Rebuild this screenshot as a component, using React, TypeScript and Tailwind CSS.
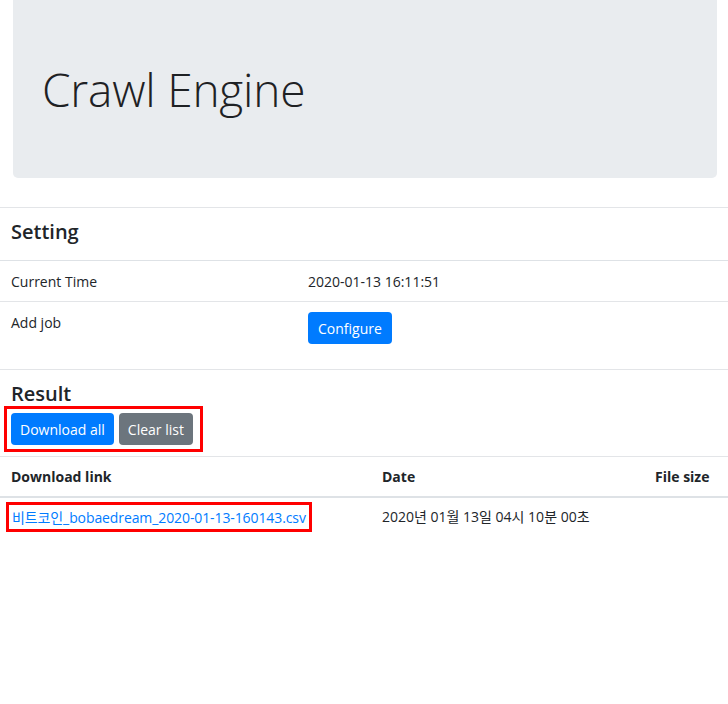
import React from "react";

const font = "font-['Open_Sans','Noto_Sans_CJK_KR',sans-serif]";

export default function App() {
  return (
    <div className={`${font} bg-white text-[#212529] text-[14px] w-[728px] h-[704px] overflow-hidden`}>
      {/* Jumbotron */}
      <div className="ml-[13px] mr-[11px] h-[178px] bg-[#e9ecef] rounded-b-[5px] pl-[29px] flex items-center">
        <h1 className="text-[46px] font-light leading-none tracking-[-0.2px] text-[#1e2124]">Crawl Engine</h1>
      </div>

      {/* Setting */}
      <div className="mt-[29px] border-t border-[#e3e5e8]">
        <div className="h-[53px] flex items-center px-[11px] pb-[5px] border-b border-[#dee2e6]">
          <h2 className="text-[20px] font-semibold">Setting</h2>
        </div>
        <div className="grid grid-cols-[297px_1fr] h-[41px] items-center border-b border-[#e3e5e8]">
          <div className="px-[11px]">Current Time</div>
          <div className="px-[11px]">2020-01-13 16:11:51</div>
        </div>
        <div className="grid grid-cols-[297px_1fr] h-[68px] pt-[10px] border-b border-[#e3e5e8]">
          <div className="px-[11px]">Add job</div>
          <div className="px-[11px]">
            <button className="h-[32px] px-[10px] rounded-[4px] bg-[#007bff] text-white">Configure</button>
          </div>
        </div>
      </div>

      {/* Result */}
      <div className="pt-[12px]">
        <h2 className="px-[11px] text-[20px] font-semibold leading-[24px]">Result</h2>
        <div className="ml-[4px] w-[199px] h-[46px] border-[3px] border-[#ff0000] flex items-center gap-[5px] pl-[4px]">
          <button className="h-[32px] px-[9px] rounded-[4px] bg-[#007bff] text-white whitespace-nowrap">Download all</button>
          <button className="h-[32px] px-[9px] rounded-[4px] bg-[#6c757d] text-white whitespace-nowrap">Clear list</button>
        </div>
      </div>

      <div className="mt-[4px] border-t border-[#e3e5e8]">
        <div className="grid grid-cols-[371px_273px_1fr] h-[41px] items-center border-b-2 border-[#dee2e6] font-bold">
          <div className="px-[11px]">Download link</div>
          <div className="px-[11px]">Date</div>
          <div className="px-[11px]">File size</div>
        </div>
        <div className="grid grid-cols-[371px_273px_1fr] h-[42px] items-start pt-[4px]">
          <div className="pl-[6px]">
            <a href="#" className="inline-flex items-center h-[30px] border-[3px] border-[#ff0000] px-[3px] text-[#007bff] whitespace-nowrap tracking-[-0.1px]">
              비트코인_bobaedream_2020-01-13-160143.csv
            </a>
          </div>
          <div className="px-[11px] whitespace-nowrap leading-[30px]">2020년 01월 13일 04시 10분 00초</div>
          <div className="px-[11px]"></div>
        </div>
      </div>
    </div>
  );
}
